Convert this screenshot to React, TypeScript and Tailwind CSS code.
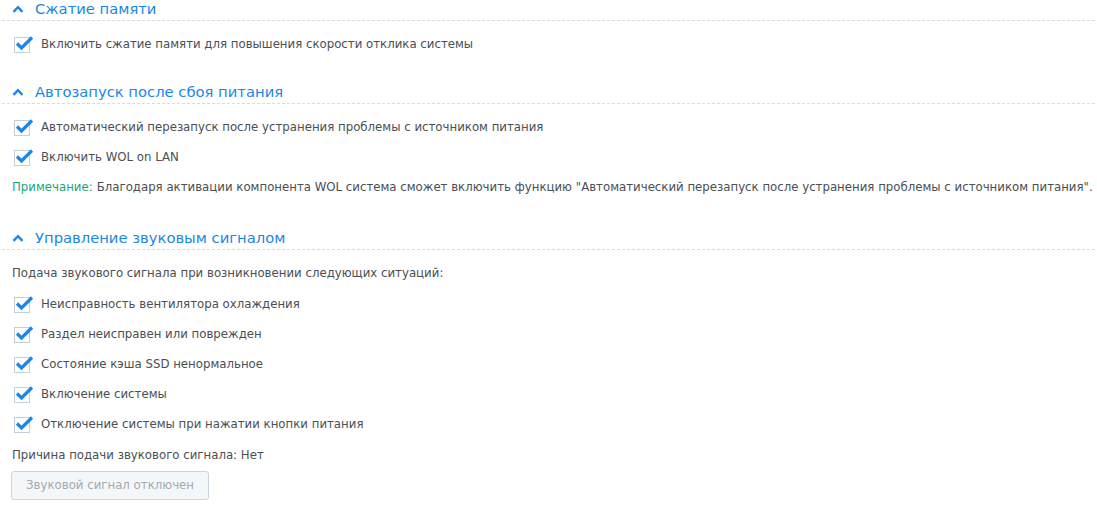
import React from "react";

const font = { fontFamily: '"DejaVu Sans", Verdana, sans-serif' };

function Chevron() {
  return (
    <svg width="12" height="8" viewBox="0 0 12 8" className="shrink-0">
      <path d="M1.5 6.8 L6 2.2 L10.5 6.8" fill="none" stroke="#1a87e6" strokeWidth="2.4" />
    </svg>
  );
}

function Section({ title, children }: { title: string; children: React.ReactNode }) {
  return (
    <div>
      <div className="flex items-center h-[20px] pl-[12px] gap-[11px]">
        <Chevron />
        <span className="text-[14.75px] text-[#1a87e6] leading-none">{title}</span>
      </div>
      <div className="mt-[1px] ml-[2px] mr-[2px] border-t border-dashed border-[#d3dde8]" />
      {children}
    </div>
  );
}

function Check({ label }: { label: string }) {
  return (
    <div className="flex items-center h-[30px] pl-[14px]">
      <div className="relative w-[16px] h-[16px] border border-[#c4cfdb] bg-white shrink-0">
        <svg width="20" height="16" viewBox="0 0 20 16" className="absolute left-[0px] top-[-3px]">
          <path d="M2 8.5 L6.5 13 L17 2.5" fill="none" stroke="#1a87e6" strokeWidth="3.2" strokeLinecap="butt" />
        </svg>
      </div>
      <span className="ml-[11px] text-[11.75px] text-[#4a4f55] whitespace-nowrap">{label}</span>
    </div>
  );
}

export default function App() {
  return (
    <div className="w-[1097px] h-[512px] bg-white overflow-hidden" style={font}>
      <div className="-mt-[1px]">
        <Section title="Сжатие памяти">
          <div className="pt-[9px]">
            <Check label="Включить сжатие памяти для повышения скорости отклика системы" />
          </div>
        </Section>
        <div className="h-[22px]" />
        <Section title="Автозапуск после сбоя питания">
          <div className="pt-[9px]">
            <Check label="Автоматический перезапуск после устранения проблемы с источником питания" />
            <Check label="Включить WOL on LAN" />
          </div>
          <div className="h-[30px] flex items-center pl-[12px] text-[11.75px] text-[#4a4f55] whitespace-nowrap">
            <span className="text-[#1fa37b]">Примечание:</span>
            <span className="ml-[4px]">
              Благодаря активации компонента WOL система сможет включить функцию "Автоматический перезапуск после устранения проблемы с источником питания".
            </span>
          </div>
        </Section>
        <div className="h-[25px]" />
        <Section title="Управление звуковым сигналом">
          <div className="h-[32px] mt-[8px] flex items-center pl-[12px] text-[11.75px] text-[#4a4f55] whitespace-nowrap">
            Подача звукового сигнала при возникновении следующих ситуаций:
          </div>
          <Check label="Неисправность вентилятора охлаждения" />
          <Check label="Раздел неисправен или поврежден" />
          <Check label="Состояние кэша SSD ненормальное" />
          <Check label="Включение системы" />
          <Check label="Отключение системы при нажатии кнопки питания" />
          <div className="h-[31px] flex items-center pl-[12px] text-[11.75px] text-[#4a4f55] whitespace-nowrap">
            Причина подачи звукового сигнала: Нет
          </div>
          <div className="pl-[11px]">
            <button className="w-[198px] h-[29px] rounded-[3px] border border-[#cbd5e1] bg-[#f4f7fa] text-[11.75px] text-[#a3a9b0]">
              Звуковой сигнал отключен
            </button>
          </div>
        </Section>
      </div>
    </div>
  );
}
